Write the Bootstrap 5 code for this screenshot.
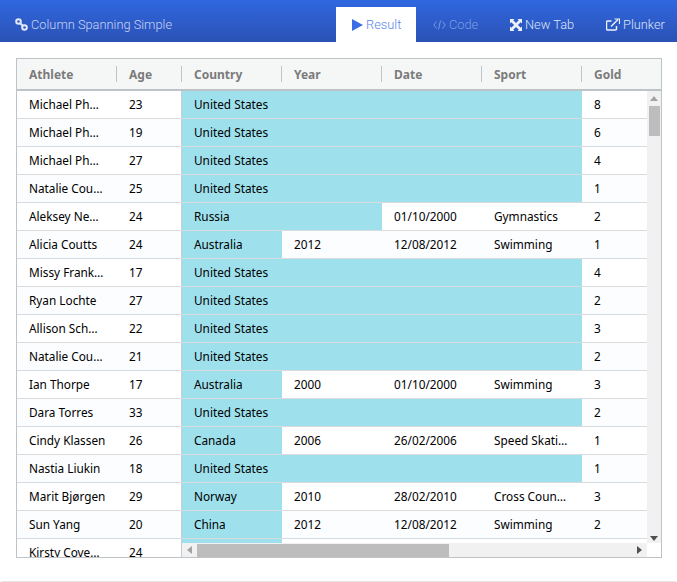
<!DOCTYPE html>
<html lang="en"><head><meta charset="utf-8"><title>Column Spanning Simple</title>
<link href="https://cdn.jsdelivr.net/npm/bootstrap@5.3.0/dist/css/bootstrap.min.css" rel="stylesheet">
<style>
html,body{height:582px;overflow:hidden;background:#fff}
body{position:relative;font-family:Roboto,sans-serif}
.topbar{height:42px;background:linear-gradient(#3067e0,#2b52b4);font-size:12.8px;font-weight:300;color:#c3d0f3}
.topbar a{text-decoration:none;color:#dde5fa;height:35px;margin-top:7px;display:flex;align-items:center;gap:3px;white-space:nowrap;flex:none}
.brand{margin-left:15px;color:#c8d5f6!important;margin-right:auto}
.tab-active{background:#fff;width:80px;padding-left:16px;color:#5a84ec!important}
.tab-code{width:94px;padding-left:17px;color:#7c9be6!important}
.tab-new{width:96px;padding-left:0}
.tab-plunk{width:71px}
.gridbox{margin:16px 15px 0 16px;height:500px;border:1px solid #bdc3c7;font-family:"Noto Sans",sans-serif;font-size:11.8px;color:#000;overflow:hidden;position:relative}
.ghead{height:32px;background:#f5f7f7;border-bottom:2px solid #bdc3c7;font-weight:700;color:#7b7b7b;font-size:12px}
.ghead>div{padding-left:12px;line-height:31px;position:relative}
.ghead>div+div::before{content:"";position:absolute;left:-1px;top:7px;height:16px;width:1px;background:#bfc4c8}
.c1{width:100px}.c2{width:65px}.c3,.c4,.c5,.c6{width:100px}.c7{width:65px}
.s2{width:200px}.s4{width:400px}
.grow{height:28px;border-bottom:1px solid #d9dcde;background:#fff}
.grow:nth-child(even){background:#fcfdff}
.grow>div{padding-left:12px;line-height:27px;white-space:nowrap;overflow:hidden;flex:none}
.grow>.c2{border-right:1px solid #c8ccd0}
.grow>.c3,.grow>.s2,.grow>.s4{background:#9ee1ed}
.gbody{width:630px;height:466px;overflow:hidden}
.vbar{position:absolute;right:0;top:32px;width:14px;height:454px;background:#f1f1f1}
.vbar i{position:absolute;left:2px;top:15px;width:11px;height:30px;background:#bdbdbd}
.hbar{position:absolute;left:165px;right:0;bottom:0;height:14px;background:#f1f1f1}
.hbar i{position:absolute;left:15px;top:1px;width:252px;height:13px;background:#bdbdbd}
.hcorner{position:absolute;right:0;bottom:0;width:14px;height:14px;background:#fff}
.arrow{position:absolute}
.foot{position:absolute;left:0;right:0;top:581px;height:6px;border:1px solid #e4e4e4;border-radius:4px}
</style></head><body>
<div class="topbar d-flex">
<a class="brand" href="#"><svg width="13" height="13" viewBox="0 0 13 13" fill="none" stroke="#e4eafb" stroke-width="2"><circle cx="3.5" cy="3.5" r="2.3"/><circle cx="9.5" cy="9.5" r="2.3"/><path d="M5 5l3 3"/></svg>Column Spanning Simple</a>
<a class="tab-active" href="#"><svg width="11" height="12" viewBox="0 0 11 12"><path d="M0 0l11 6-11 6z" fill="#3b6ee6"/></svg>Result</a>
<a class="tab-code" href="#"><svg width="13" height="10" viewBox="0 0 13 10" fill="none" stroke="#7c9be6" stroke-width="1"><path d="M3.5 1.5L.8 5l2.7 3.5M9.5 1.5L12.2 5 9.5 8.5M7.5 .5l-2 9"/></svg>Code</a>
<a class="tab-new" href="#"><svg width="12" height="12" viewBox="0 0 12 12" fill="#eef2fd"><path d="M0 0h4.500L3.200 1.300 6 4.100 8.800 1.300 7.500 0H12v4.500L10.700 3.200 7.900 6l2.800 2.800L12 7.500V12H7.500l1.300-1.300L6 7.900 3.200 10.700 4.500 12H0V7.500l1.300 1.300L4.100 6 1.300 3.200 0 4.500z"/></svg>New Tab</a>
<a class="tab-plunk" href="#"><svg width="14" height="13" viewBox="0 0 14 13" fill="none" stroke="#eef2fd" stroke-width="1.500"><path d="M10.500 8v3a1 1 0 0 1-1 1h-8a1 1 0 0 1-1-1V4a1 1 0 0 1 1-1h4"/><path d="M5 8.500L12 1.500"/><path d="M8.500 1h5v5" stroke-width="1.200"/></svg>Plunker</a>
</div>
<div class="gridbox">
<div class="ghead d-flex"><div class="c1">Athlete</div><div class="c2">Age</div><div class="c3">Country</div><div class="c4">Year</div><div class="c5">Date</div><div class="c6">Sport</div><div class="c7">Gold</div></div>
<div class="gbody">
<div class="grow d-flex"><div class="c1">Michael Ph…</div><div class="c2">23</div><div class="s4">United States</div><div class="c7">8</div></div>
<div class="grow d-flex"><div class="c1">Michael Ph…</div><div class="c2">19</div><div class="s4">United States</div><div class="c7">6</div></div>
<div class="grow d-flex"><div class="c1">Michael Ph…</div><div class="c2">27</div><div class="s4">United States</div><div class="c7">4</div></div>
<div class="grow d-flex"><div class="c1">Natalie Cou…</div><div class="c2">25</div><div class="s4">United States</div><div class="c7">1</div></div>
<div class="grow d-flex"><div class="c1">Aleksey Ne…</div><div class="c2">24</div><div class="s2">Russia</div><div class="c5">01/10/2000</div><div class="c6">Gymnastics</div><div class="c7">2</div></div>
<div class="grow d-flex"><div class="c1">Alicia Coutts</div><div class="c2">24</div><div class="c3">Australia</div><div class="c4">2012</div><div class="c5">12/08/2012</div><div class="c6">Swimming</div><div class="c7">1</div></div>
<div class="grow d-flex"><div class="c1">Missy Frank…</div><div class="c2">17</div><div class="s4">United States</div><div class="c7">4</div></div>
<div class="grow d-flex"><div class="c1">Ryan Lochte</div><div class="c2">27</div><div class="s4">United States</div><div class="c7">2</div></div>
<div class="grow d-flex"><div class="c1">Allison Sch…</div><div class="c2">22</div><div class="s4">United States</div><div class="c7">3</div></div>
<div class="grow d-flex"><div class="c1">Natalie Cou…</div><div class="c2">21</div><div class="s4">United States</div><div class="c7">2</div></div>
<div class="grow d-flex"><div class="c1">Ian Thorpe</div><div class="c2">17</div><div class="c3">Australia</div><div class="c4">2000</div><div class="c5">01/10/2000</div><div class="c6">Swimming</div><div class="c7">3</div></div>
<div class="grow d-flex"><div class="c1">Dara Torres</div><div class="c2">33</div><div class="s4">United States</div><div class="c7">2</div></div>
<div class="grow d-flex"><div class="c1">Cindy Klassen</div><div class="c2">26</div><div class="c3">Canada</div><div class="c4">2006</div><div class="c5">26/02/2006</div><div class="c6">Speed Skati…</div><div class="c7">1</div></div>
<div class="grow d-flex"><div class="c1">Nastia Liukin</div><div class="c2">18</div><div class="s4">United States</div><div class="c7">1</div></div>
<div class="grow d-flex"><div class="c1">Marit Bjørgen</div><div class="c2">29</div><div class="c3">Norway</div><div class="c4">2010</div><div class="c5">28/02/2010</div><div class="c6">Cross Coun…</div><div class="c7">3</div></div>
<div class="grow d-flex"><div class="c1">Sun Yang</div><div class="c2">20</div><div class="c3">China</div><div class="c4">2012</div><div class="c5">12/08/2012</div><div class="c6">Swimming</div><div class="c7">2</div></div>
<div class="grow d-flex"><div class="c1">Kirsty Cove…</div><div class="c2">24</div><div class="c3"></div><div class="c4"></div></div>
</div>
<div class="vbar"><i></i><svg class="arrow" style="left:3px;top:5px" width="8" height="5" viewBox="0 0 8 5"><path d="M4 0l4 5H0z" fill="#a3a3a3"/></svg><svg class="arrow" style="left:3px;bottom:4px" width="8" height="5" viewBox="0 0 8 5"><path d="M4 5L8 0H0z" fill="#505050"/></svg></div>
<div class="hbar"><i></i><svg class="arrow" style="left:5px;top:3px" width="5" height="8" viewBox="0 0 5 8"><path d="M0 4l5-4v8z" fill="#a3a3a3"/></svg><svg class="arrow" style="right:19px;top:3px" width="5" height="8" viewBox="0 0 5 8"><path d="M5 4L0 0v8z" fill="#505050"/></svg></div>
<div class="hcorner"></div>
</div>
<div class="foot"></div>
<script src="https://cdn.jsdelivr.net/npm/bootstrap@5.3.0/dist/js/bootstrap.bundle.min.js"></script>
</body></html>
